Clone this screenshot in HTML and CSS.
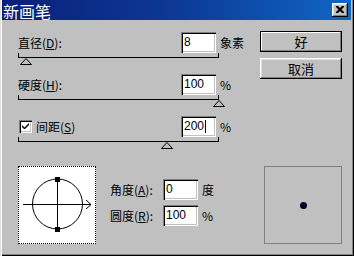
FILE: index.html
```html
<!DOCTYPE html>
<html lang="zh">
<head>
<meta charset="utf-8">
<link rel="stylesheet" href="styles.css">
</head>
<body>
<div class="window">
  <div class="titlebar">
    <span class="title">新画笔</span>
    <span class="close">
      <svg width="8" height="7" viewBox="0 0 8 7"><path d="M0 0h2l2 2 2-2h2v1l-2.5 2.5L8 6v1H6L4 5 2 7H0V6l2.5-2.5L0 1z" fill="#000"/></svg>
    </span>
  </div>
  <div class="body">
    <div class="top">
      <div class="controls">
        <div class="group">
          <div class="row">
            <span class="label">直径(<u>D</u>):</span>
            <span class="field">8</span>
            <span class="unit">象素</span>
          </div>
          <div class="slider">
            <div class="track"></div>
            <svg class="thumb" style="left:2px" width="12" height="7" viewBox="0 0 12 7"><path d="M6 0.5 L11.5 6.5 L0.5 6.5 Z" fill="#c0c0c0" stroke="#000"/></svg>
          </div>
        </div>
        <div class="group">
          <div class="row">
            <span class="label">硬度(<u>H</u>):</span>
            <span class="field">100</span>
            <span class="unit">%</span>
          </div>
          <div class="slider">
            <div class="track"></div>
            <svg class="thumb" style="left:195px" width="12" height="7" viewBox="0 0 12 7"><path d="M6 0.5 L11.5 6.5 L0.5 6.5 Z" fill="#c0c0c0" stroke="#000"/></svg>
          </div>
        </div>
        <div class="group">
          <div class="row">
            <span class="label">
              <span class="checkbox"><svg width="9" height="9" viewBox="0 0 9 9"><path d="M1 3v2l2 2h1l4-4V1L3.5 5.5z" fill="#000"/></svg></span>
              间距(<u>S</u>)
            </span>
            <span class="field">200<span class="caret"></span></span>
            <span class="unit">%</span>
          </div>
          <div class="slider">
            <div class="track"></div>
            <svg class="thumb" style="left:143px" width="12" height="7" viewBox="0 0 12 7"><path d="M6 0.5 L11.5 6.5 L0.5 6.5 Z" fill="#c0c0c0" stroke="#000"/></svg>
          </div>
        </div>
      </div>
      <div class="buttons">
        <span class="btn default">好</span>
        <span class="btn">取消</span>
      </div>
    </div>
    <div class="bottom">
      <div class="brush">
        <svg width="76" height="76" viewBox="0 0 76 76" shape-rendering="crispEdges">
          <circle cx="38.5" cy="37" r="25" fill="none" stroke="#000" shape-rendering="auto"/>
          <line x1="4" y1="37.5" x2="72" y2="37.5" stroke="#000"/>
          <polyline points="67,33 72,37.5 67,42" fill="none" stroke="#000" shape-rendering="auto"/>
          <line x1="38.5" y1="11" x2="38.5" y2="64" stroke="#000"/>
          <rect x="36" y="10" width="5" height="5" fill="#000"/>
          <rect x="36" y="60" width="5" height="5" fill="#000"/>
        </svg>
      </div>
      <div class="fields">
        <div class="frow">
          <span class="flabel">角度(<u>A</u>):</span>
          <span class="field">0</span>
          <span class="unit">度</span>
        </div>
        <div class="frow">
          <span class="flabel">圆度(<u>R</u>):</span>
          <span class="field">100</span>
          <span class="unit">%</span>
        </div>
      </div>
      <div class="preview"><span class="dot"></span></div>
    </div>
  </div>
</div>
</body>
</html>
```
FILE: styles.css
```css
* { box-sizing: border-box; }
html, body { margin: 0; padding: 0; }
body {
  width: 354px;
  height: 256px;
  overflow: hidden;
  font-family: "Noto Sans CJK SC", "Liberation Sans", sans-serif;
  font-size: 12px;
  color: #000;
}
.window {
  width: 354px;
  height: 256px;
  background: #c0c0c0;
  padding: 0 3px 3px 2px;
  box-shadow: inset 1px 0 0 #dfdfdf, inset 2px 0 0 #fff, inset -1px -1px 0 #000, inset -2px -2px 0 #808080;
}
.titlebar {
  height: 20px;
  background: linear-gradient(to right, #0a1f78 0%, #0c3a96 50%, #1066c4 100%);
  display: flex;
  align-items: center;
  justify-content: space-between;
  padding: 0 3px 0 1px;
}
.title {
  color: #fff;
  font-size: 16px;
  line-height: 16px;
  padding-top: 1px;
}
.close {
  width: 16px;
  height: 14px;
  background: #c0c0c0;
  box-shadow: inset -1px -1px 0 #000, inset 1px 1px 0 #fff, inset -2px -2px 0 #808080, inset 2px 2px 0 #dfdfdf;
  display: flex;
  align-items: center;
  justify-content: center;
  padding-bottom: 1px;
}
.body {
  padding: 11px 9px 0 16px;
}
.top {
  display: flex;
}
.controls {
  width: 242px;
  padding-top: 1px;
}
.row {
  display: flex;
  align-items: center;
  height: 21px;
}
.label {
  width: 163px;
  display: flex;
  align-items: center;
  white-space: nowrap;
}
.label u, .flabel u { text-underline-offset: 1px; }
.field {
  width: 35px;
  height: 21px;
  background: #fff;
  box-shadow: inset 1px 1px 0 #808080, inset 2px 2px 0 #000, inset -1px -1px 0 #fff, inset -2px -2px 0 #c0c0c0;
  font-family: "Liberation Sans", sans-serif;
  font-size: 12px;
  line-height: 21px;
  padding-left: 3px;
  display: flex;
  align-items: center;
}
.caret {
  display: inline-block;
  width: 1px;
  height: 13px;
  background: #000;
  margin-left: 1px;
}
.unit {
  margin-left: 4px;
  white-space: nowrap;
}
.slider {
  position: relative;
  width: 201px;
  height: 21px;
}
.track {
  height: 5px;
  border: 1px solid #000;
  border-top: none;
}
.thumb {
  position: absolute;
  top: 5px;
}
.checkbox {
  width: 13px;
  height: 13px;
  background: #fff;
  box-shadow: inset 1px 1px 0 #808080, inset 2px 2px 0 #000, inset -1px -1px 0 #fff, inset -2px -2px 0 #c0c0c0;
  display: inline-flex;
  align-items: center;
  justify-content: center;
  margin: 0 4px 0 1px;
}
.buttons {
  width: 82px;
  display: flex;
  flex-direction: column;
  gap: 6px;
}
.btn {
  height: 21px;
  background: #c0c0c0;
  box-shadow: inset -1px -1px 0 #000, inset 1px 1px 0 #fff, inset -2px -2px 0 #808080, inset 2px 2px 0 #dfdfdf;
  display: flex;
  align-items: center;
  justify-content: center;
  font-size: 13px;
}
.btn.default {
  box-shadow: inset 0 0 0 1px #000, inset -2px -2px 0 #808080, inset 2px 2px 0 #fff;
}
.bottom {
  display: flex;
  margin-top: 8px;
}
.brush {
  width: 78px;
  height: 78px;
  background: #fff;
  border: 1px dotted #000;
}
.brush svg { display: block; }
.fields {
  margin-left: 14px;
  padding-top: 13px;
  display: flex;
  flex-direction: column;
  gap: 5px;
}
.frow {
  display: flex;
  align-items: center;
  height: 21px;
}
.flabel {
  width: 53px;
  white-space: nowrap;
}
.preview {
  width: 78px;
  height: 78px;
  margin-left: auto;
  border: 1px solid #808080;
  display: flex;
  align-items: center;
  justify-content: center;
}
.dot {
  width: 7px;
  height: 7px;
  border-radius: 50%;
  background: #000020;
}
```
